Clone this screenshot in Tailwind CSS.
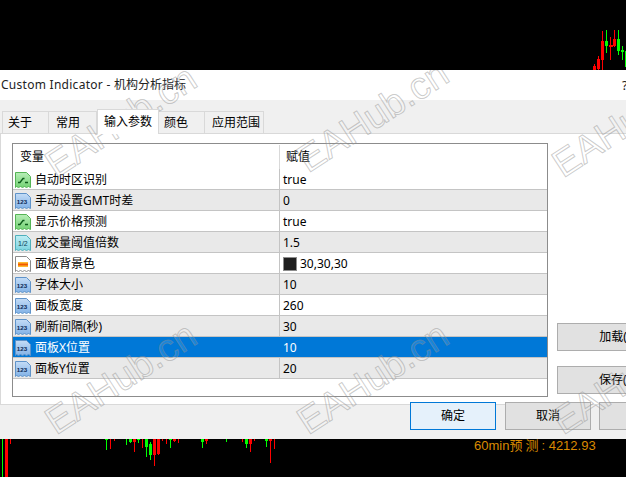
<!DOCTYPE html>
<html lang="en">

<head>
	<meta charset="UTF-8">
	<title>Custom Indicator</title>
	<script src="https://cdn.jsdelivr.net/npm/@tailwindcss/browser@4"></script>
</head>

<body class="bg-black w-[626px] h-[477px] overflow-hidden relative font-['Noto_Sans','Noto_Sans_CJK_SC',sans-serif] text-[12px] text-black">

	<svg class="absolute w-0 h-0">
		<defs>
			<linearGradient id="blueFill" x1="0" y1="0" x2="0" y2="1"><stop offset="0" stop-color="#c4dcf6"/><stop offset="1" stop-color="#82b2e6"/></linearGradient>
			<linearGradient id="greenFill" x1="0" y1="0" x2="0" y2="1"><stop offset="0" stop-color="#b8eeb8"/><stop offset="1" stop-color="#74d274"/></linearGradient>
			<linearGradient id="tealFill" x1="0" y1="0" x2="0" y2="1"><stop offset="0" stop-color="#c0eef4"/><stop offset="1" stop-color="#7cd4e0"/></linearGradient>
			<linearGradient id="orangeFill" x1="0" y1="0" x2="0" y2="1"><stop offset="0" stop-color="#ffd23c"/><stop offset="0.5" stop-color="#f25a00"/><stop offset="1" stop-color="#ffd23c"/></linearGradient>
			<symbol id="iconNum" viewBox="0 0 16 16"><path d="M.5.5h11l4 4v11l-2-1-2 1-2-1-2 1-2-1-2 1-2-1-1 1z" fill="url(#blueFill)" stroke="#5f93c9"/><text x="1.8" y="11" font-family="Liberation Sans" font-size="6.2" font-weight="700" fill="#0a2a55">123</text></symbol>
			<symbol id="iconBool" viewBox="0 0 16 16"><path d="M.5.5h11l4 4v11l-2-1-2 1-2-1-2 1-2-1-2 1-2-1-1 1z" fill="url(#greenFill)" stroke="#55b455"/><path d="M3 10.5h2l3-4h1.500M10 10.500h3" fill="none" stroke="#0d5c1a" stroke-width="1.3"/></symbol>
			<symbol id="iconDouble" viewBox="0 0 16 16"><path d="M.5.5h11l4 4v11l-2-1-2 1-2-1-2 1-2-1-2 1-2-1-1 1z" fill="url(#tealFill)" stroke="#4fb0bc"/><text x="3" y="10.500" font-family="Liberation Sans" font-size="7" fill="#0a3a55">1/2</text></symbol>
			<symbol id="iconColor" viewBox="0 0 16 16"><path d="M.5.5h11l4 4v11l-2-1-2 1-2-1-2 1-2-1-2 1-2-1-1 1z" fill="#fff" stroke="#8a8a8a"/><rect x="3" y="6" width="10" height="5" fill="url(#orangeFill)"/></symbol>
		</defs>
	</svg>

	<!-- chart behind the dialog -->
	<svg class="absolute left-0 top-0" width="626" height="477" shape-rendering="crispEdges">
		<g fill="#ff0000">
			<path d="M593 66h3v4h-3zM594 64h1v2h-1zM597 59h3v10h-3zM598 56h1v14h-1zM601 41h3v19h-3zM602 31h1v39h-1zM609 45h4v2h-4zM610 37h1v23h-1zM613 39h3v7h-3zM614 30h1v17h-1z"/>
			<path d="M5 439h3v38h-3zM10 439h1v5h-1zM110 439h1v10h-1zM114 439h1v2h-1zM133 439h3v3h-3zM134 439h1v13h-1zM142 439h1v9h-1zM153 439h3v16h-3zM154 439h1v27h-1zM157 439h3v15h-3zM158 439h1v16h-1zM162 439h1v2h-1zM166 439h1v5h-1zM173 439h3v2h-3zM174 439h1v3h-1zM178 439h1v4h-1zM205 439h3v2h-3zM206 439h1v5h-1zM242 439h1v3h-1zM249 439h3v5h-3zM250 439h1v13h-1zM254 439h1v2h-1zM269 439h3v2h-3zM270 439h1v24h-1zM274 439h1v10h-1z"/>
		</g>
		<g fill="#00ff00">
			<path d="M605 41h3v5h-3zM606 30h1v23h-1zM617 39h3v12h-3zM618 30h1v25h-1zM621 50h3v2h-3zM622 46h1v14h-1zM625 51h1v16h-1z"/>
			<path d="M2 439h1v38h-1zM105 439h3v1h-3zM106 439h1v11h-1zM126 439h1v6h-1zM129 439h3v3h-3zM130 439h1v4h-1zM137 439h3v1h-3zM138 439h1v4h-1zM145 439h3v8h-3zM146 439h1v18h-1zM149 444h3v11h-3zM150 442h1v18h-1zM169 439h3v1h-3zM170 439h1v9h-1zM201 439h3v3h-3zM202 439h1v9h-1zM226 439h1v3h-1zM245 439h3v5h-3zM246 439h1v9h-1zM265 439h3v2h-3zM266 439h1v8h-1z"/>
		</g>
	</svg>
	<div class="absolute left-[474px] top-[437px] text-[13px] leading-[18px] text-[#d98a00] font-['Liberation_Sans','Noto_Sans_CJK_SC',sans-serif] whitespace-nowrap">60min<span class="tracking-[3px]">预测</span>: 4212.93</div>

	<!-- dialog -->
	<div class="absolute left-0 top-[70px] w-[640px] h-[369px] bg-[#f0f0f0] flex flex-col overflow-hidden">
		<div class="h-[30px] bg-white flex items-center pl-px text-[#222]">
			<span class="tracking-[0.27px] whitespace-pre">Custom Indicator - </span><span>机构分析指标</span>
			<span class="absolute left-[622px] top-[6px] text-[13px] leading-[18px]">?</span>
		</div>

		<div class="flex items-end h-[33px] pl-[2px]">
			<div class="h-[22px] w-[47px] pl-[5px] flex items-center border border-b-0 border-[#d9d9d9]">关于</div>
			<div class="h-[22px] w-[48px] pl-[7px] flex items-center border border-b-0 border-l-0 border-[#d9d9d9]">常用</div>
			<div class="h-[25px] w-[62px] -mb-px z-10 bg-white flex items-center justify-center border border-b-0 border-[#d9d9d9]">输入参数</div>
			<div class="h-[22px] w-[46px] pl-[5px] flex items-center border border-b-0 border-l-0 border-[#d9d9d9]">颜色</div>
			<div class="h-[22px] w-[59px] pl-[7px] flex items-center border border-b-0 border-l-0 border-[#d9d9d9]">应用范围</div>
		</div>

		<div class="h-[272px] bg-white border border-[#d9d9d9] pt-[9px] pl-[11px] flex gap-[9px]">
			<div class="w-[536px] h-[254px] shrink-0 border border-[#8c8c8c] flex flex-col">
				<div class="h-[25px] flex shrink-0">
					<div class="w-[266px] pl-[7px] pt-px flex items-center">变量</div>
					<div class="flex-1 border-l border-[#d9d9d9] mt-px pl-[6px] flex items-center">赋值</div>
				</div>

				<div class="flex h-[21px] border-b border-[#c4c4c4] bg-white">
					<div class="w-[266px] flex items-center gap-[4px] pl-[2px] pt-[2px]">
						<svg width="16" height="16"><use href="#iconBool"/></svg>
						<span>自动时区识别</span>
					</div>
					<div class="flex-1 border-l border-[#c4c4c4] pl-[3px] pt-[2px] flex items-center">true</div>
				</div>
				<div class="flex h-[21px] border-b border-[#c4c4c4] bg-[#e9e9e9]">
					<div class="w-[266px] flex items-center gap-[4px] pl-[2px] pt-[2px]">
						<svg width="16" height="16"><use href="#iconNum"/></svg>
						<span>手动设置GMT时差</span>
					</div>
					<div class="flex-1 border-l border-[#c4c4c4] pl-[3px] pt-[2px] flex items-center">0</div>
				</div>
				<div class="flex h-[21px] border-b border-[#c4c4c4] bg-white">
					<div class="w-[266px] flex items-center gap-[4px] pl-[2px] pt-[2px]">
						<svg width="16" height="16"><use href="#iconBool"/></svg>
						<span>显示价格预测</span>
					</div>
					<div class="flex-1 border-l border-[#c4c4c4] pl-[3px] pt-[2px] flex items-center">true</div>
				</div>
				<div class="flex h-[21px] border-b border-[#c4c4c4] bg-[#e9e9e9]">
					<div class="w-[266px] flex items-center gap-[4px] pl-[2px] pt-[2px]">
						<svg width="16" height="16"><use href="#iconDouble"/></svg>
						<span>成交量阈值倍数</span>
					</div>
					<div class="flex-1 border-l border-[#c4c4c4] pl-[3px] pt-[2px] flex items-center">1.5</div>
				</div>
				<div class="flex h-[21px] border-b border-[#c4c4c4] bg-white">
					<div class="w-[266px] flex items-center gap-[4px] pl-[2px] pt-[2px]">
						<svg width="16" height="16"><use href="#iconColor"/></svg>
						<span>面板背景色</span>
					</div>
					<div class="flex-1 border-l border-[#c4c4c4] pl-[3px] pt-[2px] flex items-center gap-[3px]"><span class="w-[14px] h-[14px] bg-[#1e1e1e] border border-[#8c8c8c]"></span>30,30,30</div>
				</div>
				<div class="flex h-[21px] border-b border-[#c4c4c4] bg-[#e9e9e9]">
					<div class="w-[266px] flex items-center gap-[4px] pl-[2px] pt-[2px]">
						<svg width="16" height="16"><use href="#iconNum"/></svg>
						<span>字体大小</span>
					</div>
					<div class="flex-1 border-l border-[#c4c4c4] pl-[3px] pt-[2px] flex items-center">10</div>
				</div>
				<div class="flex h-[21px] border-b border-[#c4c4c4] bg-white">
					<div class="w-[266px] flex items-center gap-[4px] pl-[2px] pt-[2px]">
						<svg width="16" height="16"><use href="#iconNum"/></svg>
						<span>面板宽度</span>
					</div>
					<div class="flex-1 border-l border-[#c4c4c4] pl-[3px] pt-[2px] flex items-center">260</div>
				</div>
				<div class="flex h-[21px] border-b border-[#c4c4c4] bg-[#e9e9e9]">
					<div class="w-[266px] flex items-center gap-[4px] pl-[2px] pt-[2px]">
						<svg width="16" height="16"><use href="#iconNum"/></svg>
						<span>刷新间隔(秒)</span>
					</div>
					<div class="flex-1 border-l border-[#c4c4c4] pl-[3px] pt-[2px] flex items-center">30</div>
				</div>
				<div class="flex h-[21px] border-b border-[#c4c4c4] bg-[#0078d7] text-white">
					<div class="w-[266px] flex items-center gap-[4px] pl-[2px] pt-[2px]">
						<svg width="16" height="16"><use href="#iconNum"/></svg>
						<span>面板X位置</span>
					</div>
					<div class="flex-1 pl-[4px] pt-[2px] flex items-center">10</div>
				</div>
				<div class="flex h-[21px] border-b border-[#c4c4c4] bg-[#e9e9e9]">
					<div class="w-[266px] flex items-center gap-[4px] pl-[2px] pt-[2px]">
						<svg width="16" height="16"><use href="#iconNum"/></svg>
						<span>面板Y位置</span>
					</div>
					<div class="flex-1 border-l border-[#c4c4c4] pl-[3px] pt-[2px] flex items-center">20</div>
				</div>
			</div>

			<div class="flex flex-col gap-[15px] pt-[180px]">
				<div class="w-[122px] h-[28px] bg-[#e1e1e1] border border-[#adadad] flex items-center justify-center">加载(L)</div>
				<div class="w-[122px] h-[28px] bg-[#e1e1e1] border border-[#adadad] flex items-center justify-center">保存(S)</div>
			</div>
		</div>

		<div class="absolute left-[410px] top-[332px] flex gap-[9px]">
			<div class="w-[86px] h-[28px] bg-[#e5f1fb] border border-[#0078d7] flex items-center justify-center">确定</div>
			<div class="w-[86px] h-[28px] bg-[#e1e1e1] border border-[#adadad] flex items-center justify-center">取消</div>
			<div class="w-[86px] h-[28px] bg-[#e1e1e1] border border-[#adadad] -ml-px"></div>
		</div>

		<!-- watermark -->
		<span class="absolute left-[35px] top-[32px] -rotate-[33deg] font-['Liberation_Sans'] text-[38px] leading-none whitespace-nowrap text-white/10 [-webkit-text-stroke:1px_rgba(140,140,140,0.45)]">EAHub.cn</span>
		<span class="absolute left-[287px] top-[27px] -rotate-[33deg] font-['Liberation_Sans'] text-[38px] leading-none whitespace-nowrap text-white/10 [-webkit-text-stroke:1px_rgba(140,140,140,0.45)]">EAHub.cn</span>
		<span class="absolute left-[542px] top-[32px] -rotate-[33deg] font-['Liberation_Sans'] text-[38px] leading-none whitespace-nowrap text-white/10 [-webkit-text-stroke:1px_rgba(140,140,140,0.45)]">EAHub.cn</span>
		<span class="absolute left-[35px] top-[289px] -rotate-[33deg] font-['Liberation_Sans'] text-[38px] leading-none whitespace-nowrap text-white/10 [-webkit-text-stroke:1px_rgba(140,140,140,0.45)]">EAHub.cn</span>
		<span class="absolute left-[287px] top-[289px] -rotate-[33deg] font-['Liberation_Sans'] text-[38px] leading-none whitespace-nowrap text-white/10 [-webkit-text-stroke:1px_rgba(140,140,140,0.45)]">EAHub.cn</span>
		<span class="absolute left-[542px] top-[289px] -rotate-[33deg] font-['Liberation_Sans'] text-[38px] leading-none whitespace-nowrap text-white/10 [-webkit-text-stroke:1px_rgba(140,140,140,0.45)]">EAHub.cn</span>
	</div>
</body>

</html>
